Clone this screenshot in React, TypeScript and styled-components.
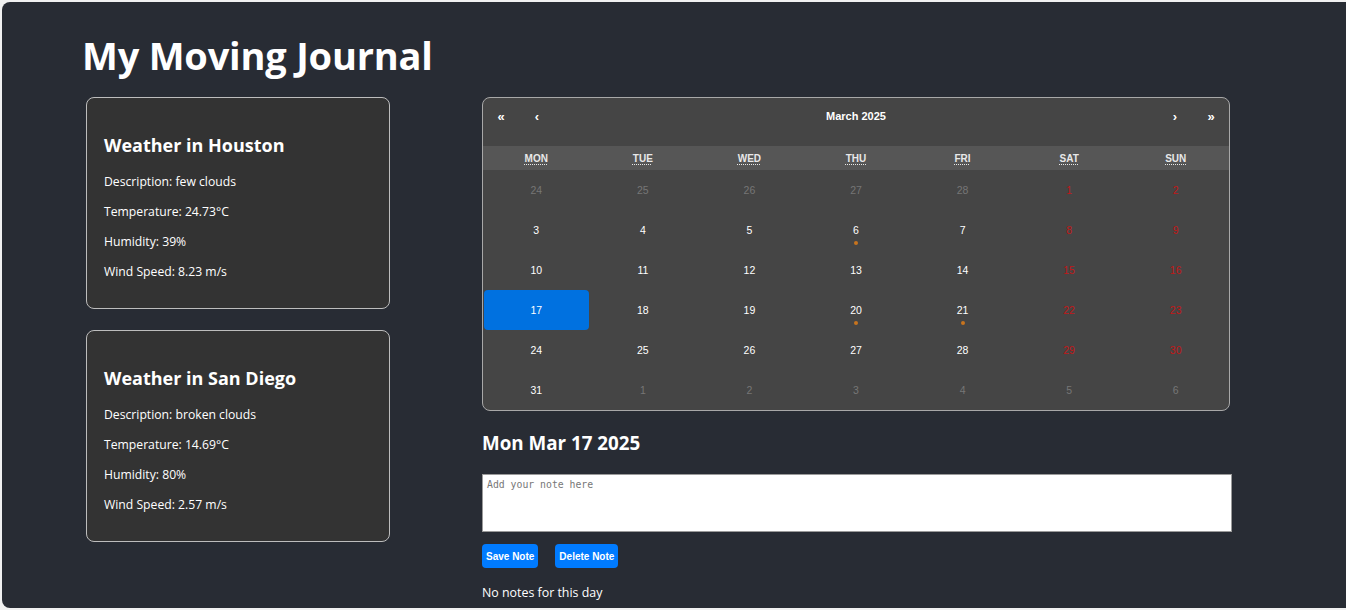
import React from "react";
import styled, { createGlobalStyle } from "styled-components";

const GlobalStyle = createGlobalStyle`
  html, body { margin: 0; padding: 0; background: #f1f1f1; overflow: hidden; }
  body { font-family: "Open Sans", "Noto Sans", sans-serif; }
`;

const Panel = styled.div`
  margin: 2px 0 0 2px;
  height: 606px;
  background: #282c34;
  border-radius: 8px 0 0 8px;
  color: #fff;
  box-sizing: border-box;
  padding: 26px 0 0 80px;
`;

const Title = styled.h1`
  margin: 0 0 15px 0;
  font-size: 38px;
  line-height: 54px;
  font-weight: 700;
  letter-spacing: -0.2px;
`;

const Columns = styled.div`
  display: grid;
  grid-template-columns: 304px 750px;
  column-gap: 92px;
  padding-left: 4px;
  align-items: start;
`;

const LeftCol = styled.div`
  display: flex;
  flex-direction: column;
  gap: 21px;
`;

const Card = styled.div`
  box-sizing: border-box;
  height: 212px;
  background: #333333;
  border: 1px solid #bdbdbd;
  border-radius: 8px;
  padding: 16px 17px;
`;

const CardTitle = styled.h3`
  margin: 19px 0 15px;
  font-size: 18px;
  line-height: 25px;
  font-weight: 700;
`;

const CardLine = styled.p`
  margin: 0 0 13px;
  font-size: 12.2px;
  line-height: 17px;
`;

const RightCol = styled.div`
  display: flex;
  flex-direction: column;
`;

const Calendar = styled.div`
  box-sizing: border-box;
  width: 748px;
  background: #454545;
  border: 1px solid #a8a8a8;
  border-radius: 8px;
  font-family: "Liberation Sans", Arial, sans-serif;
  overflow: hidden;
`;

const Nav = styled.div`
  display: flex;
  align-items: center;
  height: 36px;
  margin-bottom: 12px;
`;

const NavButton = styled.button`
  width: 36px;
  height: 36px;
  background: none;
  border: none;
  color: #fff;
  font-family: "Liberation Sans", Arial, sans-serif;
  font-size: 13px;
  font-weight: 700;
  padding: 0;
`;

const NavLabel = styled.div`
  flex: 1;
  text-align: center;
  font-size: 11px;
  font-weight: 700;
`;

const Weekdays = styled.div`
  display: grid;
  grid-template-columns: repeat(7, 1fr);
  box-sizing: border-box;
  height: 24px;
  padding-bottom: 3px;
  background: #565656;
  align-items: center;
  text-align: center;
`;

const Weekday = styled.abbr`
  font-size: 10px;
  font-weight: 700;
  color: #e8e8e8;
  text-decoration: underline dotted;
  text-underline-offset: 2px;
`;

const Days = styled.div`
  display: grid;
  grid-template-columns: repeat(7, 1fr);
  grid-auto-rows: 40px;
`;

type Kind = "normal" | "weekend" | "neighbor";

const Tile = styled.div<{ $kind: Kind; $active?: boolean }>`
  position: relative;
  display: flex;
  align-items: center;
  justify-content: center;
  font-size: 10.5px;
  border-radius: 4px;
  margin: 0 1px;
  background: ${(p) => (p.$active ? "#0071e0" : "transparent")};
  color: ${(p) =>
    p.$kind === "neighbor" ? "#767676" : p.$kind === "weekend" ? "#c01818" : "#ffffff"};
`;

const Dot = styled.span`
  position: absolute;
  left: 50%;
  top: 31px;
  width: 4px;
  height: 4px;
  margin-left: -2px;
  border-radius: 50%;
  background: #c8741e;
`;

const DateHeading = styled.h2`
  margin: 19px 0 0;
  font-size: 18.8px;
  line-height: 26px;
  font-weight: 700;
`;

const NoteArea = styled.textarea`
  box-sizing: border-box;
  margin-top: 18px;
  width: 750px;
  height: 58px;
  resize: none;
  border: 1px solid #9a9a9a;
  background: #fff;
  padding: 4px 4px;
  font-family: "DejaVu Sans Mono", "Liberation Mono", monospace;
  font-size: 9.8px;
  &::placeholder { color: #777; }
`;

const ButtonRow = styled.div`
  display: flex;
  gap: 17px;
  margin-top: 12px;
`;

const ActionButton = styled.button`
  height: 24px;
  padding: 0 4px;
  background: #007bff;
  color: #fff;
  border: none;
  border-radius: 4px;
  font-family: "Liberation Sans", Arial, sans-serif;
  font-size: 10px;
  font-weight: 700;
`;

const Empty = styled.p`
  margin: 15px 0 0;
  font-size: 12.4px;
  line-height: 19px;
`;

const weekdays = ["Mon", "Tue", "Wed", "Thu", "Fri", "Sat", "Sun"];

type Day = { n: number; kind: Kind; dot?: boolean; active?: boolean };

const days: Day[] = (() => {
  const out: Day[] = [];
  [24, 25, 26, 27, 28].forEach((n) => out.push({ n, kind: "neighbor" }));
  for (let d = 1; d <= 31; d++) {
    const idx = out.length % 7;
    out.push({
      n: d,
      kind: idx >= 5 ? "weekend" : "normal",
      dot: d === 6 || d === 20 || d === 21,
      active: d === 17,
    });
  }
  [1, 2, 3, 4, 5, 6].forEach((n) => out.push({ n, kind: "neighbor" }));
  return out;
})();

const weather = [
  { city: "Houston", desc: "few clouds", temp: "24.73", hum: "39", wind: "8.23" },
  { city: "San Diego", desc: "broken clouds", temp: "14.69", hum: "80", wind: "2.57" },
];

export default function App() {
  return (
    <>
      <GlobalStyle />
      <Panel>
        <Title>My Moving Journal</Title>
        <Columns>
          <LeftCol>
            {weather.map((w) => (
              <Card key={w.city}>
                <CardTitle>Weather in {w.city}</CardTitle>
                <CardLine>Description: {w.desc}</CardLine>
                <CardLine>Temperature: {w.temp}°C</CardLine>
                <CardLine>Humidity: {w.hum}%</CardLine>
                <CardLine>Wind Speed: {w.wind} m/s</CardLine>
              </Card>
            ))}
          </LeftCol>
          <RightCol>
            <Calendar>
              <Nav>
                <NavButton>«</NavButton>
                <NavButton>‹</NavButton>
                <NavLabel>March 2025</NavLabel>
                <NavButton>›</NavButton>
                <NavButton>»</NavButton>
              </Nav>
              <Weekdays>
                {weekdays.map((d) => (
                  <div key={d}>
                    <Weekday title={d}>{d.toUpperCase()}</Weekday>
                  </div>
                ))}
              </Weekdays>
              <Days>
                {days.map((d, i) => (
                  <Tile key={i} $kind={d.kind} $active={d.active}>
                    {d.n}
                    {d.dot && <Dot />}
                  </Tile>
                ))}
              </Days>
            </Calendar>
            <DateHeading>Mon Mar 17 2025</DateHeading>
            <NoteArea placeholder="Add your note here" />
            <ButtonRow>
              <ActionButton>Save Note</ActionButton>
              <ActionButton>Delete Note</ActionButton>
            </ButtonRow>
            <Empty>No notes for this day</Empty>
          </RightCol>
        </Columns>
      </Panel>
    </>
  );
}
